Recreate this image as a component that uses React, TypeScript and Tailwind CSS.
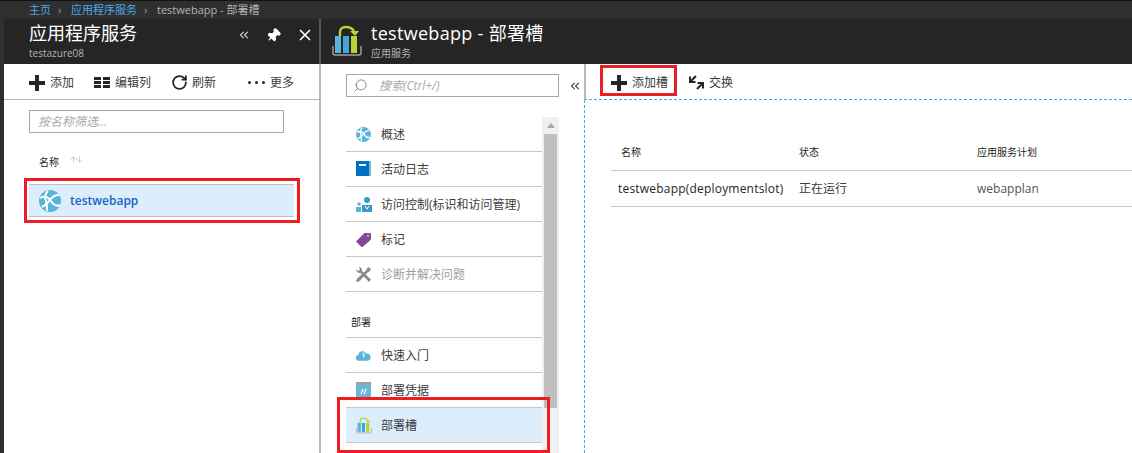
import { RotateCw, Pin, X, ChevronsLeft, Search, ArrowUp, ArrowDown } from 'lucide-react';

const font = "font-['Open_Sans','Noto_Sans_CJK_SC',sans-serif]";

function GlobeIcon({ size = 22 }: { size?: number }) {
  return (
    <svg width={size} height={size} viewBox="0 0 22 22">
      <circle cx="11" cy="11" r="11" fill="#59b4d9" />
      <path d="M1 8c5-3 9 0 11 3s5 6 9 4" stroke="#fff" strokeWidth="2" fill="none" />
      <path d="M9 1C5 5 6 8 7 11s1 7 1 10" stroke="#fff" strokeWidth="2" fill="none" />
      <path d="M20 5c-4 0-7 2-9 5s-4 5-8 7" stroke="#fff" strokeWidth="2" fill="none" />
    </svg>
  );
}

function SlotIcon({ big }: { big?: boolean }) {
  return (
    <svg width={big ? 30 : 16} height={big ? 32 : 17} viewBox="0 0 30 32">
      <path d="M8 11V7c0-3 2-5 6-5s6 1 8 4" stroke="#b8d432" strokeWidth="2.400" fill="none" />
      <path d="M18 6h9l-4 5z" fill="#b8d432" />
      <rect x="3" y="11" width="6" height="17" fill="#59b4d9" />
      <rect x="11" y="11" width="6" height="17" fill="#3fa8d6" />
      <rect x="19" y="11" width="6" height="17" fill="#b8d432" />
      <path d="M1 21v7c0 1 1 2 2 2h24c1 0 2-1 2-2v-7" stroke="#a0a1a2" strokeWidth="1.400" fill="none" />
    </svg>
  );
}

function BookIcon() {
  return (
    <svg width="15" height="16" viewBox="0 0 15 16">
      <rect x="1" y="0" width="14" height="15" fill="#7fb2d9" />
      <rect x="0" y="0" width="13" height="15" fill="#0072c6" />
      <rect x="3" y="3" width="7" height="2" fill="#fff" />
    </svg>
  );
}

function UsersIcon() {
  return (
    <svg width="16" height="15" viewBox="0 0 16 15">
      <circle cx="11" cy="3" r="3" fill="#3999c6" />
      <path d="M6 15V8h10v7z" fill="#3999c6" />
      <circle cx="3" cy="7" r="1.800" fill="#59b4d9" />
      <path d="M0 15v-5h5v5z" fill="#59b4d9" />
      <path d="M9 9l2 3 2-3" stroke="#fff" fill="none" />
    </svg>
  );
}

function TagIcon() {
  return (
    <svg width="15" height="15" viewBox="0 0 15 15">
      <path d="M0 9.500L8 1.500c.5-.5 1-.5 1.500-.5H14c.5 0 1 .5 1 1v4.500c0 .5 0 1-.5 1.500L6 15.500z" fill="#804998" />
      <circle cx="12" cy="3.800" r="1" fill="#d9c6e2" />
    </svg>
  );
}

function ToolsIcon() {
  return (
    <svg width="15" height="15" viewBox="0 0 15 15" fill="#8a8a8a">
      <path d="M3 0c2 0 3.500 2 3 4l9 8.500-2 2.500L4.500 6C2.500 6.500 0 5 0 2.500L2 4l2-1.500z" />
      <path d="M12 0l3 2-2 3-1.500.5L3.500 14 1 15 0 13.500l1.500-2.300 8-7.200z" />
    </svg>
  );
}

function CloudIcon() {
  return (
    <svg width="15" height="11" viewBox="0 0 16 11">
      <path d="M3 11a3 3 0 0 1-.5-6A4.500 4.500 0 0 1 11 3.500 3.800 3.800 0 0 1 12.500 11z" fill="#59b4d9" />
      <path d="M9 1L7 5h2L8 8" stroke="#fff" fill="none" />
    </svg>
  );
}

function CredIcon() {
  return (
    <svg width="15" height="16" viewBox="0 0 15 16">
      <rect width="15" height="16" fill="#6ab7dc" />
      <rect width="15" height="3" fill="#a0a1a2" />
      <path d="M5 12l2-5M8 12l2-5" stroke="#fff" strokeWidth="1.200" />
    </svg>
  );
}

function SwapIcon() {
  return (
    <svg width="15" height="15" viewBox="0 0 15 15" fill="none" stroke="#252525" strokeWidth="2">
      <path d="M1 1.500V7h5.500M1.500 6.500L7 1" />
      <path d="M8.500 8H14v5.500M13.500 8.500L8 14" />
    </svg>
  );
}

function PlusIcon() {
  return (
    <svg width="16" height="16" viewBox="0 0 16 16" fill="#252525">
      <rect x="6" width="4" height="16" />
      <rect y="6" width="16" height="4" />
    </svg>
  );
}

function ColumnsIcon() {
  return (
    <svg width="16" height="11" viewBox="0 0 16 11" fill="#252525">
      <rect width="7" height="3" />
      <rect x="9" width="7" height="3" />
      <rect y="4" width="7" height="3" />
      <rect x="9" y="4" width="7" height="3" />
      <rect y="8" width="7" height="3" />
      <rect x="9" y="8" width="7" height="3" />
    </svg>
  );
}

function MoreIcon() {
  return (
    <svg width="17" height="3" viewBox="0 0 17 3" fill="#252525">
      <circle cx="1.500" cy="1.500" r="1.500" />
      <circle cx="8.500" cy="1.500" r="1.500" />
      <circle cx="15.500" cy="1.500" r="1.500" />
    </svg>
  );
}

function MenuRow({ icon, label, muted, active }: { icon: React.ReactNode; label: string; muted?: boolean; active?: boolean }) {
  return (
    <div className={`flex h-[35px] items-center border-b border-[#c8c8c8] ${active ? 'bg-[#dcedfb]' : ''}`}>
      <div className="flex w-[35px] justify-center">{icon}</div>
      <span className={`pt-[2px] text-[12px] ${muted ? 'text-[#a0a0a0]' : 'text-[#3c3c3c]'}`}>{label}</span>
    </div>
  );
}

export default function App() {
  return (
    <div className={`${font} relative flex h-[453px] w-[1132px] flex-col overflow-hidden bg-white`}>
      <div className="flex h-[19px] items-center gap-[7px] border-t border-[#111] bg-[#2f2f2f] pl-[29px] text-[11px]">
        <span className="text-[#4ea6e6]">主页</span>
        <span className="w-[6px] text-[#a0a0a0]">›</span>
        <span className="text-[#4ea6e6]">应用程序服务</span>
        <span className="w-[6px] text-[#a0a0a0]">›</span>
        <span className="text-[#b4b4b4]">testwebapp - 部署槽</span>
      </div>

      <div className="flex flex-1">
        <div className="w-[4px] bg-[#2f2f2f]" />

        {/* first blade */}
        <div className="flex w-[317px] flex-col border-r-2 border-[#b8b8b8]">
          <div className="-mr-[2px] flex h-[45px] items-start justify-between border-r-2 border-[#555] bg-[#252525] pl-[25px] pr-[5px]">
            <div className="pt-[1px]">
              <div className="text-[18px] leading-[26px] text-white">应用程序服务</div>
              <div className="text-[10px] leading-[14px] text-[#b4b4b4]">testazure08</div>
            </div>
            <div className="flex items-center gap-[15px] pt-[7px] text-white">
              <ChevronsLeft size={14} className="text-[#ccc]" />
              <Pin size={15} fill="#fff" className="rotate-45" />
              <X size={18} strokeWidth={2.200} />
            </div>
          </div>
          <div className="flex h-[36px] items-center border-b border-[#b8b8b8] pl-[25px] pt-[2px] text-[12px] text-[#3c3c3c]">
            <PlusIcon />
            <span className="ml-[5px] mr-[20px]">添加</span>
            <ColumnsIcon />
            <span className="ml-[5px] mr-[20px]">编辑列</span>
            <RotateCw size={17} strokeWidth={2.500} className="mr-[4px] text-[#252525]" />
            <span className="mr-[32px]">刷新</span>
            <MoreIcon />
            <span className="ml-[5px]">更多</span>
          </div>
          <div className="px-[25px] pt-[10px]">
            <div className="flex h-[23px] w-[255px] items-center border border-[#a8a8a8] pl-[8px] text-[12px] italic text-[#a8a8a8]">
              按名称筛选...
            </div>
          </div>
          <div className="flex items-center pl-[35px] pt-[22px] text-[10px] text-[#252525]">
            <span>名称</span>
            <span className="ml-[10px] flex -translate-y-[3px] text-[#c0c0c0]">
              <ArrowUp size={9} />
              <ArrowDown size={9} className="-ml-[3px]" />
            </span>
          </div>
          <div className="ml-[25px] mt-[14px] flex h-[33px] w-[265px] items-center gap-[9px] border-y border-[#c0c0c0] bg-[#dcedfb] pl-[10px]">
            <GlobeIcon />
            <span className="text-[12px] font-semibold text-[#1565c8]">testwebapp</span>
          </div>
        </div>

        {/* second blade */}
        <div className="flex w-[263px] flex-col">
          <div className="flex h-[45px] items-start bg-[#252525] pl-[11px]">
            <div className="pt-[6px]"><SlotIcon big /></div>
            <div className="ml-[9px] pt-[1px]">
              <div className="text-[18px] leading-[26px] tracking-[0.3px] text-white">testwebapp - 部署槽</div>
              <div className="text-[10px] leading-[14px] text-[#b4b4b4]">应用服务</div>
            </div>
          </div>
          <div className="flex items-center pl-[25px] pt-[10px]">
            <div className="flex h-[23px] w-[213px] items-center border border-[#a8a8a8] pl-[6px] text-[12px] italic text-[#a8a8a8]">
              <Search size={15} strokeWidth={1.200} className="mr-[11px] -scale-x-100 text-[#666]" />
              搜索(Ctrl+/)
            </div>
            <ChevronsLeft size={14} className="ml-[9px] text-[#444]" />
          </div>
          <div className="flex flex-1 pt-[20px]">
            <div className="ml-[25px] w-[196px]">
              <MenuRow icon={<GlobeIcon size={15} />} label="概述" />
              <MenuRow icon={<BookIcon />} label="活动日志" />
              <MenuRow icon={<UsersIcon />} label="访问控制(标识和访问管理)" />
              <MenuRow icon={<TagIcon />} label="标记" />
              <MenuRow icon={<ToolsIcon />} label="诊断并解决问题" muted />
              <div className="flex h-[46px] items-end border-b border-[#c8c8c8] pb-[7px] pl-[5px] text-[10px] text-[#252525]">部署</div>
              <MenuRow icon={<CloudIcon />} label="快速入门" />
              <MenuRow icon={<CredIcon />} label="部署凭据" />
              <MenuRow icon={<SlotIcon />} label="部署槽" active />
            </div>
            <div className="w-[17px] bg-[#f0f0f0] pl-[2px]">
              <div className="flex h-[17px] w-[13px] items-center justify-center">
                <div className="h-0 w-0 border-x-[4px] border-b-[5px] border-x-transparent border-b-[#a8a8a8]" />
              </div>
              <div className="h-[274px] w-[13px] bg-[#bfbfbf]" />
            </div>
          </div>
        </div>

        {/* third blade */}
        <div className="flex flex-1 flex-col">
          <div className="h-[45px] bg-[#252525]" />
          <div className="flex h-[36px] items-center border-b border-l-2 border-b-[#37b0dc] border-l-[#b8b8b8] [border-bottom-style:dashed] pl-[25px] pt-[2px] text-[12px] text-[#3c3c3c]">
            <PlusIcon />
            <span className="ml-[5px] mr-[21px]">添加槽</span>
            <SwapIcon />
            <span className="ml-[5px]">交换</span>
          </div>
          <div className="flex-1 border-l border-dashed border-[#37b0dc] pl-[26px] pt-[34px]">
            <div className="flex h-[37px] items-center border-b border-[#c8c8c8] pl-[10px] text-[10px] text-[#252525]">
              <span className="w-[178px]">名称</span>
              <span className="w-[178px]">状态</span>
              <span>应用服务计划</span>
            </div>
            <div className="flex h-[36px] items-center border-b border-[#c8c8c8] pl-[7px] text-[12px] text-[#3c3c3c]">
              <span className="w-[181px] tracking-[0.2px] text-[#252525]">testwebapp(deploymentslot)</span>
              <span className="w-[178px]">正在运行</span>
              <span className="text-[#555]">webapplan</span>
            </div>
          </div>
        </div>
      </div>

      {/* red annotation boxes */}
      <div className="absolute left-[24px] top-[178px] h-[45px] w-[276px] border-[3px] border-[#ee1c25]" />
      <div className="absolute left-[600px] top-[65px] h-[31px] w-[77px] border-[3px] border-[#ee1c25]" />
      <div className="absolute left-[337px] top-[397px] h-[56px] w-[213px] border-[3px] border-[#ee1c25]" />
    </div>
  );
}
